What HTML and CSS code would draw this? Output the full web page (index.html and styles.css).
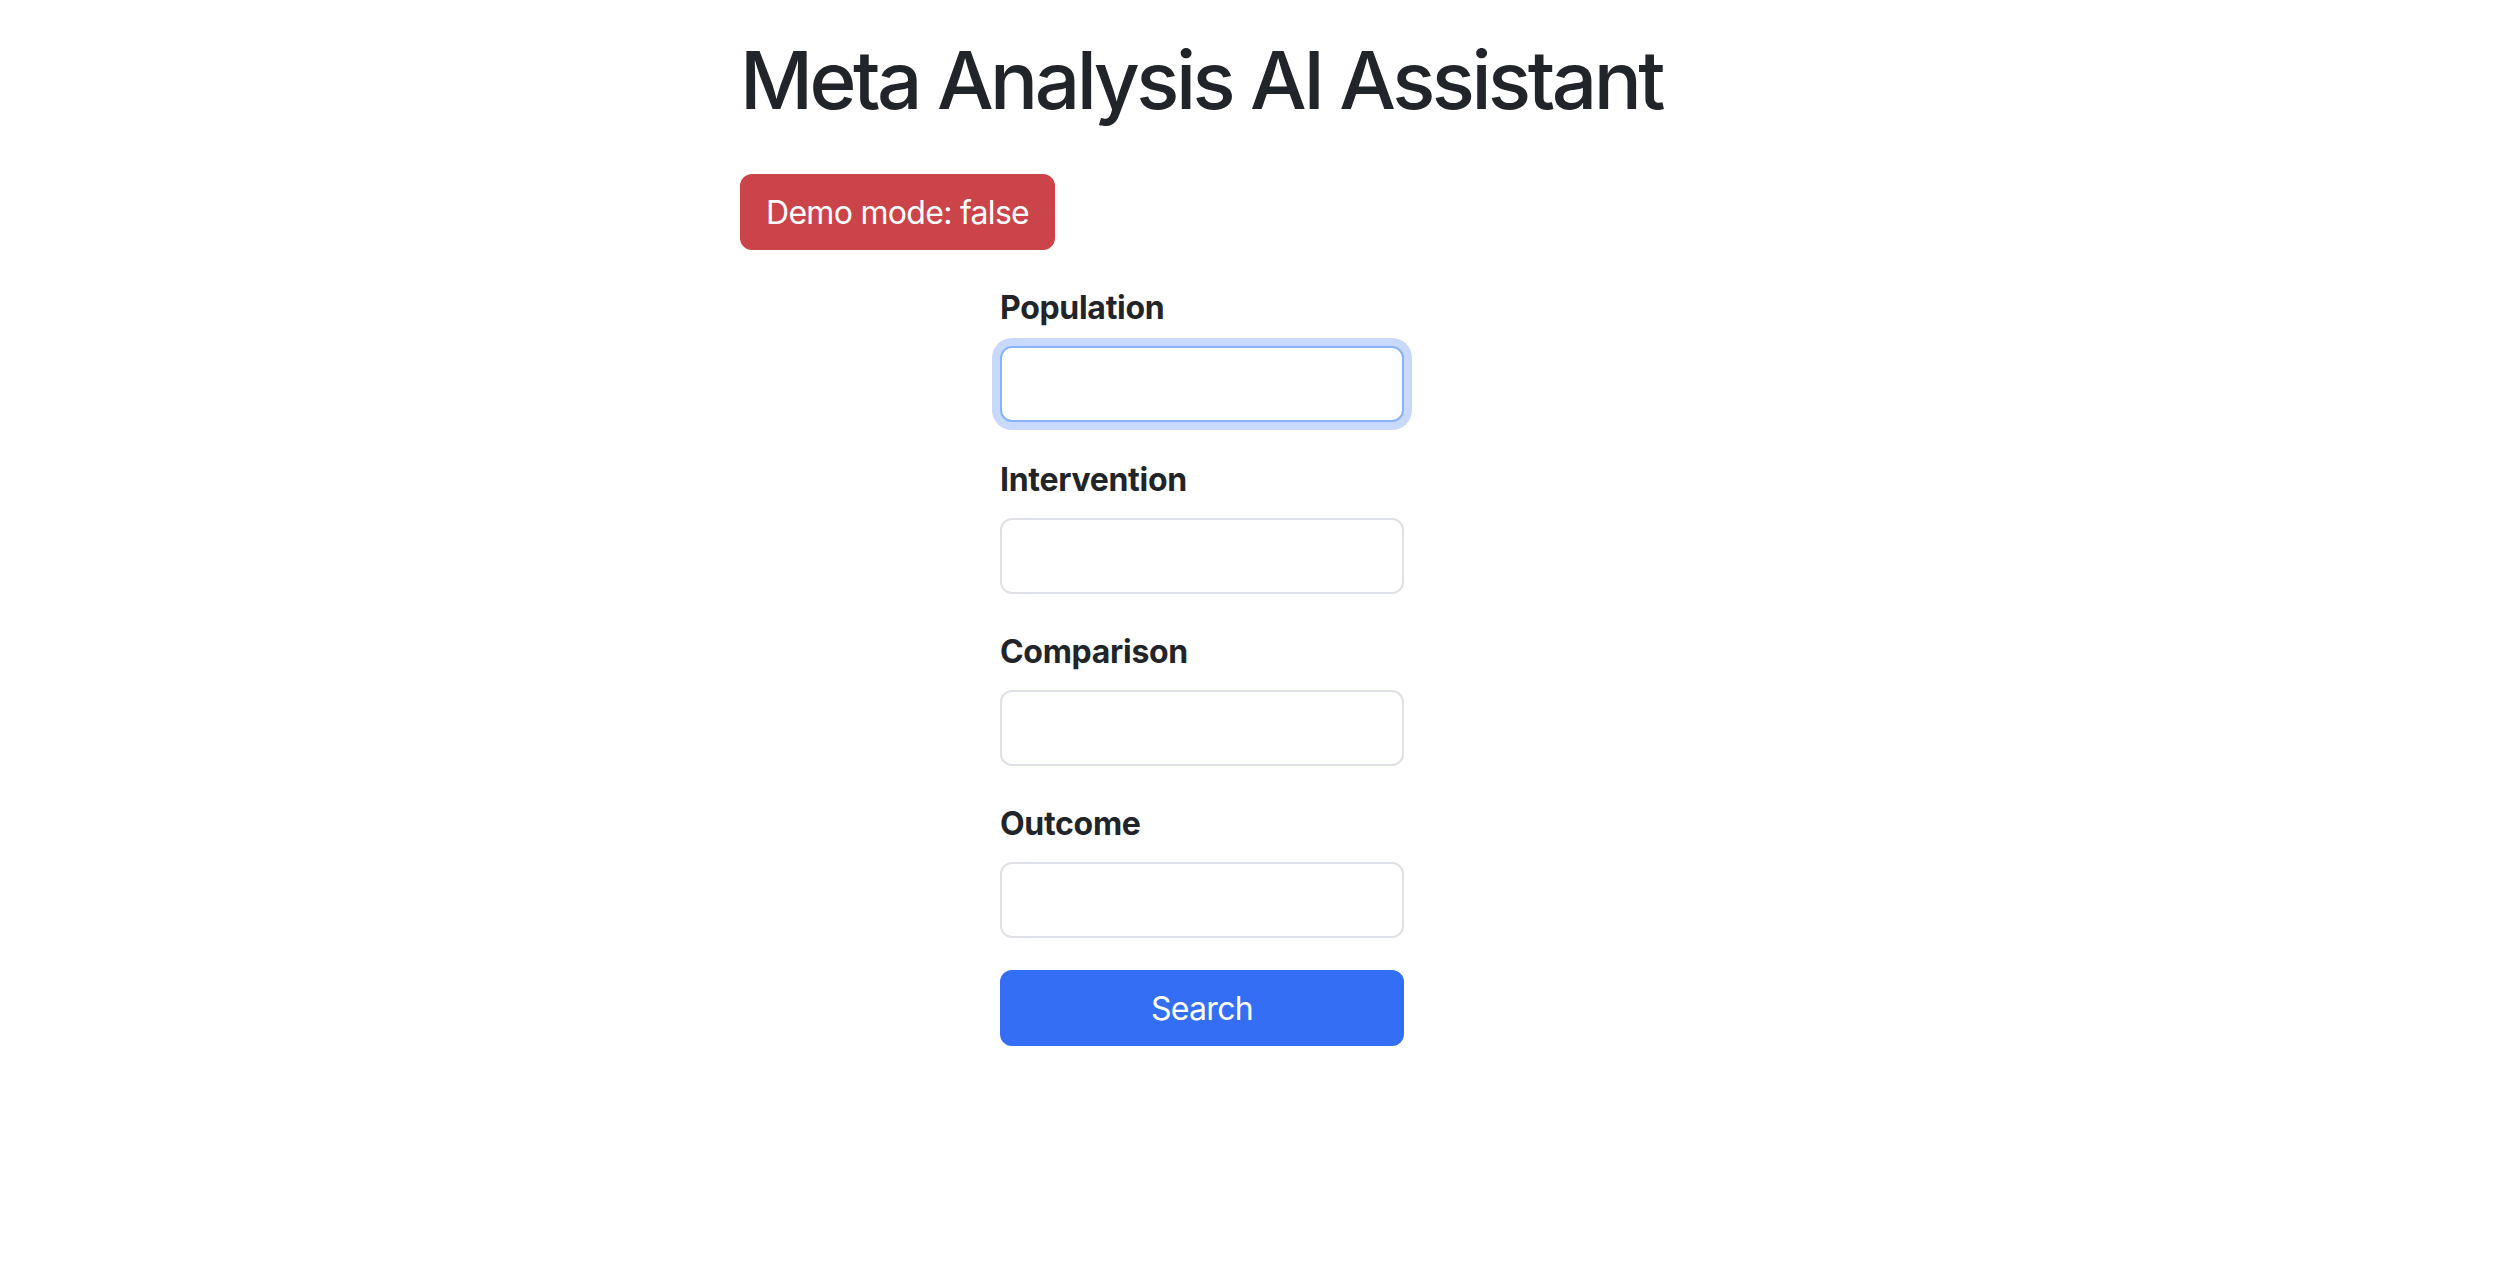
FILE: index.html
```html
<!DOCTYPE html>
<html lang="en">
<head>
<meta charset="utf-8">
<title>Meta Analysis AI Assistant</title>
<link rel="stylesheet" href="styles.css">
</head>
<body>
<div class="page">
  <h1 class="title">Meta Analysis AI Assistant</h1>
  <div class="badge-row"><button class="btn btn-danger" type="button">Demo mode: false</button></div>
  <form class="pico-form">
    <div class="group">
      <label class="form-label" for="population">Population</label>
      <input class="form-control is-focused" id="population" type="text">
    </div>
    <div class="group">
      <label class="form-label" for="intervention">Intervention</label>
      <input class="form-control" id="intervention" type="text">
    </div>
    <div class="group">
      <label class="form-label" for="comparison">Comparison</label>
      <input class="form-control" id="comparison" type="text">
    </div>
    <div class="group">
      <label class="form-label" for="outcome">Outcome</label>
      <input class="form-control" id="outcome" type="text">
    </div>
    <button class="btn btn-primary" type="button">Search</button>
  </form>
</div>
</body>
</html>
```
FILE: styles.css
```css
html, body {
  margin: 0;
  padding: 0;
  background: #ffffff;
}
body {
  font-family: Inter, "Noto Sans", "Liberation Sans", sans-serif;
  color: #212529;
}
.page {
  padding: 32px 0 0 740px;
}
.title {
  margin: 0;
  font-size: 80px;
  line-height: 96px;
  font-weight: 500;
  letter-spacing: -3.5px;
  color: #212529;
}
.badge-row {
  margin-top: 46px;
  margin-bottom: 32px;
}
.btn {
  box-sizing: border-box;
  height: 76px;
  border: 2px solid transparent;
  border-radius: 12px;
  font-family: inherit;
  font-size: 32px;
  line-height: 48px;
  font-weight: 400;
  letter-spacing: -0.7px;
  color: #ffffff;
  padding: 13px 24px 11px;
  cursor: pointer;
}
.btn-danger {
  background: #cb444a;
  border-color: #cb444a;
}
.pico-form {
  margin-left: 260px;
  width: 404px;
}
.group {
  margin-bottom: 32px;
}
.form-label {
  display: block;
  font-size: 32px;
  line-height: 48px;
  font-weight: 700;
  letter-spacing: -0.3px;
  padding-top: 2px;
  margin-bottom: 14px;
  color: #212529;
}
.form-control {
  display: block;
  box-sizing: border-box;
  width: 100%;
  height: 76px;
  margin: 0;
  border: 2px solid #dee2e6;
  border-radius: 12px;
  background: #ffffff;
  font-family: inherit;
  font-size: 32px;
  padding: 12px 24px;
  outline: none;
}
.form-control.is-focused {
  border-color: #86b5fa;
  box-shadow: 0 0 0 8px #c9d9fb;
}
.btn-primary {
  display: block;
  width: 100%;
  background: #346ef5;
  border-color: #346ef5;
}
```
